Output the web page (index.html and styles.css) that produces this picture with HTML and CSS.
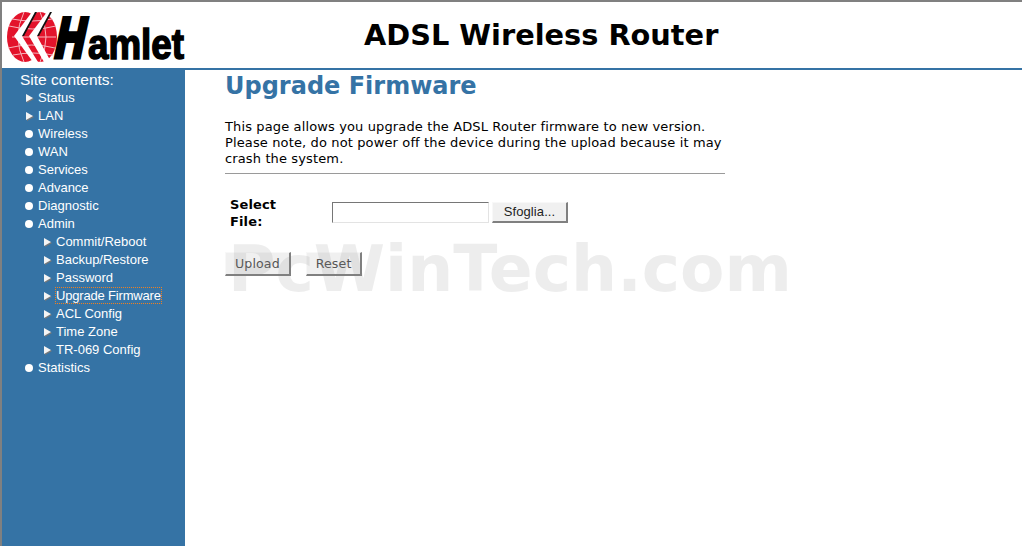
FILE: index.html
```html
<!DOCTYPE html>
<html lang="en">
<head>
  <meta charset="UTF-8">
  <title>ADSL Wireless Router</title>
  <link rel="stylesheet" href="styles.css">
</head>
<body>
  <div class="topbar">
    <svg class="logo" width="183" height="66" viewBox="2 2 183 66">
      <ellipse cx="25" cy="37" rx="18" ry="25" fill="#e3132b"/>
      <ellipse cx="40" cy="37" rx="17" ry="25" fill="#e3132b"/>
      <g fill="none" stroke="#f7b4bc" stroke-width="1">
        <path d="M9 26q24 6 47 0M8 48q24-6 47 0M12 19q20 4 40 0M13 55q20-4 40 0"/>
        <path d="M24 12q-12 25 0 50M40 12q12 25 0 50M12 37h44"/>
      </g>
      <path class="chevron-shade" d="M33 12 L37 12 L24 36 L20 36Z"/>
      <path class="chevron-shade" d="M48 12 L52 12 L39 36 L35 36Z"/>
      <path class="chevron" d="M32 12 L14 36 L33 62 L38 62 L22 36 L35 12Z"/>
      <path class="chevron" d="M47 12 L29 36 L44 62 L50 60 L37 36 L50 12Z"/>
      <g class="brand">
        <text class="brand-h" x="0" y="0" transform="translate(53 57) skewX(-12)" textLength="29" lengthAdjust="spacingAndGlyphs">H</text>
        <text class="brand-rest" x="88" y="58.5" textLength="96" lengthAdjust="spacingAndGlyphs">amlet</text>
      </g>
    </svg>
    <h1 class="product">ADSL Wireless Router</h1>
  </div>
  <div class="main">
    <div class="sidebar">
      <div class="site-title">Site contents:</div>
      <ul class="menu">
        <li class="arrow">Status</li>
        <li class="arrow">LAN</li>
        <li class="dot">Wireless</li>
        <li class="dot">WAN</li>
        <li class="dot">Services</li>
        <li class="dot">Advance</li>
        <li class="dot">Diagnostic</li>
        <li class="dot">Admin</li>
      </ul>
      <ul class="menu submenu">
        <li class="arrow">Commit/Reboot</li>
        <li class="arrow">Backup/Restore</li>
        <li class="arrow">Password</li>
        <li class="arrow"><span class="current">Upgrade Firmware</span></li>
        <li class="arrow">ACL Config</li>
        <li class="arrow">Time Zone</li>
        <li class="arrow">TR-069 Config</li>
      </ul>
      <ul class="menu">
        <li class="dot">Statistics</li>
      </ul>
    </div>
    <div class="content">
      <h2>Upgrade Firmware</h2>
      <p class="intro">This page allows you upgrade the ADSL Router firmware to new version. Please note, do not power off the device during the upload because it may crash the system.</p>
      <hr>
      <div class="file-row">
        <label for="binary">Select File:</label>
        <div class="file-box" id="binary"></div>
        <button class="browse" type="button">Sfoglia...</button>
      </div>
      <div class="actions">
        <button type="button">Upload</button>
        <button type="button">Reset</button>
      </div>
    </div>
  </div>
  <div class="watermark">PcWinTech.com</div>
</body>
</html>
```
FILE: styles.css
```css
html, body {
  margin: 0;
  padding: 0;
  height: 100%;
  overflow: hidden;
}

body {
  background: #fff;
  border-top: 2px solid #808080;
  border-left: 2px solid #808080;
  box-sizing: border-box;
  font-family: "DejaVu Sans", sans-serif;
  display: flex;
  flex-direction: column;
}

.topbar {
  height: 66px;
  display: flex;
  align-items: center;
  border-bottom: 2px solid #3573a5;
}

.logo {
  flex: none;
}

.chevron {
  fill: #fff;
}

.chevron-shade {
  fill: #111;
}

.brand {
  font-family: "Liberation Sans", sans-serif;
  font-weight: bold;
  fill: #000;
  stroke: #000;
}

.brand-h {
  font-size: 56px;
  stroke-width: 5px;
}

.brand-rest {
  font-size: 42px;
  stroke-width: 1.5px;
}

.product {
  margin: 0;
  flex: 1;
  font-size: 28.8px;
  font-weight: bold;
  color: #000;
  padding-left: 179px;
}

.main {
  flex: 1;
  display: flex;
  min-height: 0;
}

.sidebar {
  width: 183px;
  flex: none;
  background: #3573a5;
  color: #fff;
  font-family: "Liberation Sans", sans-serif;
  font-size: 13px;
}

.site-title {
  font-size: 15.5px;
  line-height: 18px;
  padding: 1px 0 0 18px;
}

.menu {
  list-style: none;
  margin: 0;
  padding: 0 0 0 36px;
}

.submenu {
  padding-left: 54px;
}

.menu li {
  height: 18px;
  line-height: 18px;
  position: relative;
}

.menu li::before {
  content: "";
  position: absolute;
}

.arrow::before {
  left: -12px;
  top: 5px;
  border-left: 7px solid #f4f4f4;
  border-top: 4px solid transparent;
  border-bottom: 4px solid transparent;
  filter: drop-shadow(1px 1px 0 #777);
}

.dot::before {
  left: -13px;
  top: 5px;
  width: 8px;
  height: 8px;
  border-radius: 50%;
  background: #fff;
}

.current {
  outline: 1px dotted #f08020;
  letter-spacing: -0.18px;
}

.content {
  padding: 0 0 0 40px;
  width: 500px;
  font-size: 13px;
  letter-spacing: 0.13px;
  color: #000;
}

h2 {
  margin: 0;
  padding-top: 1px;
  font-size: 24px;
  line-height: 30px;
  color: #3573a5;
  letter-spacing: 0;
}

.intro {
  margin: 18px 0 0;
  line-height: 16px;
}

hr {
  margin: 6px 0 0;
  border: 0;
  border-top: 1px solid #9a9a9a;
}

.file-row {
  display: flex;
  align-items: center;
  margin-top: 22px;
  padding-left: 5px;
}

label {
  width: 60px;
  margin-right: 42px;
  font-weight: bold;
  line-height: 17px;
}

.file-box {
  width: 155px;
  height: 19px;
  margin-bottom: 2px;
  border: 1px solid;
  border-color: #767676 #e3e3e3 #e3e3e3 #767676;
  background: #fff;
}

button {
  height: 24px;
  padding: 0 9px;
  background: #f0f0f0;
  border-style: solid;
  border-width: 1px 2px 2px 1px;
  border-color: #f8f8f8 #808080 #808080 #f8f8f8;
  font-family: "DejaVu Sans", sans-serif;
  font-size: 12.6px;
  letter-spacing: 0.1px;
  color: #555;
}

.browse {
  margin-left: 3px;
  margin-bottom: 2px;
  width: 76px;
  height: 21px;
  padding: 0;
  font-family: "Liberation Sans", sans-serif;
  font-size: 13px;
  color: #222;
}

.actions {
  display: flex;
  gap: 15px;
  margin-top: 22px;
}

.watermark {
  position: absolute;
  left: 228px;
  top: 231px;
  font-size: 64.7px;
  font-weight: bold;
  line-height: 76px;
  color: rgba(130, 130, 130, 0.14);
  pointer-events: none;
}
```
